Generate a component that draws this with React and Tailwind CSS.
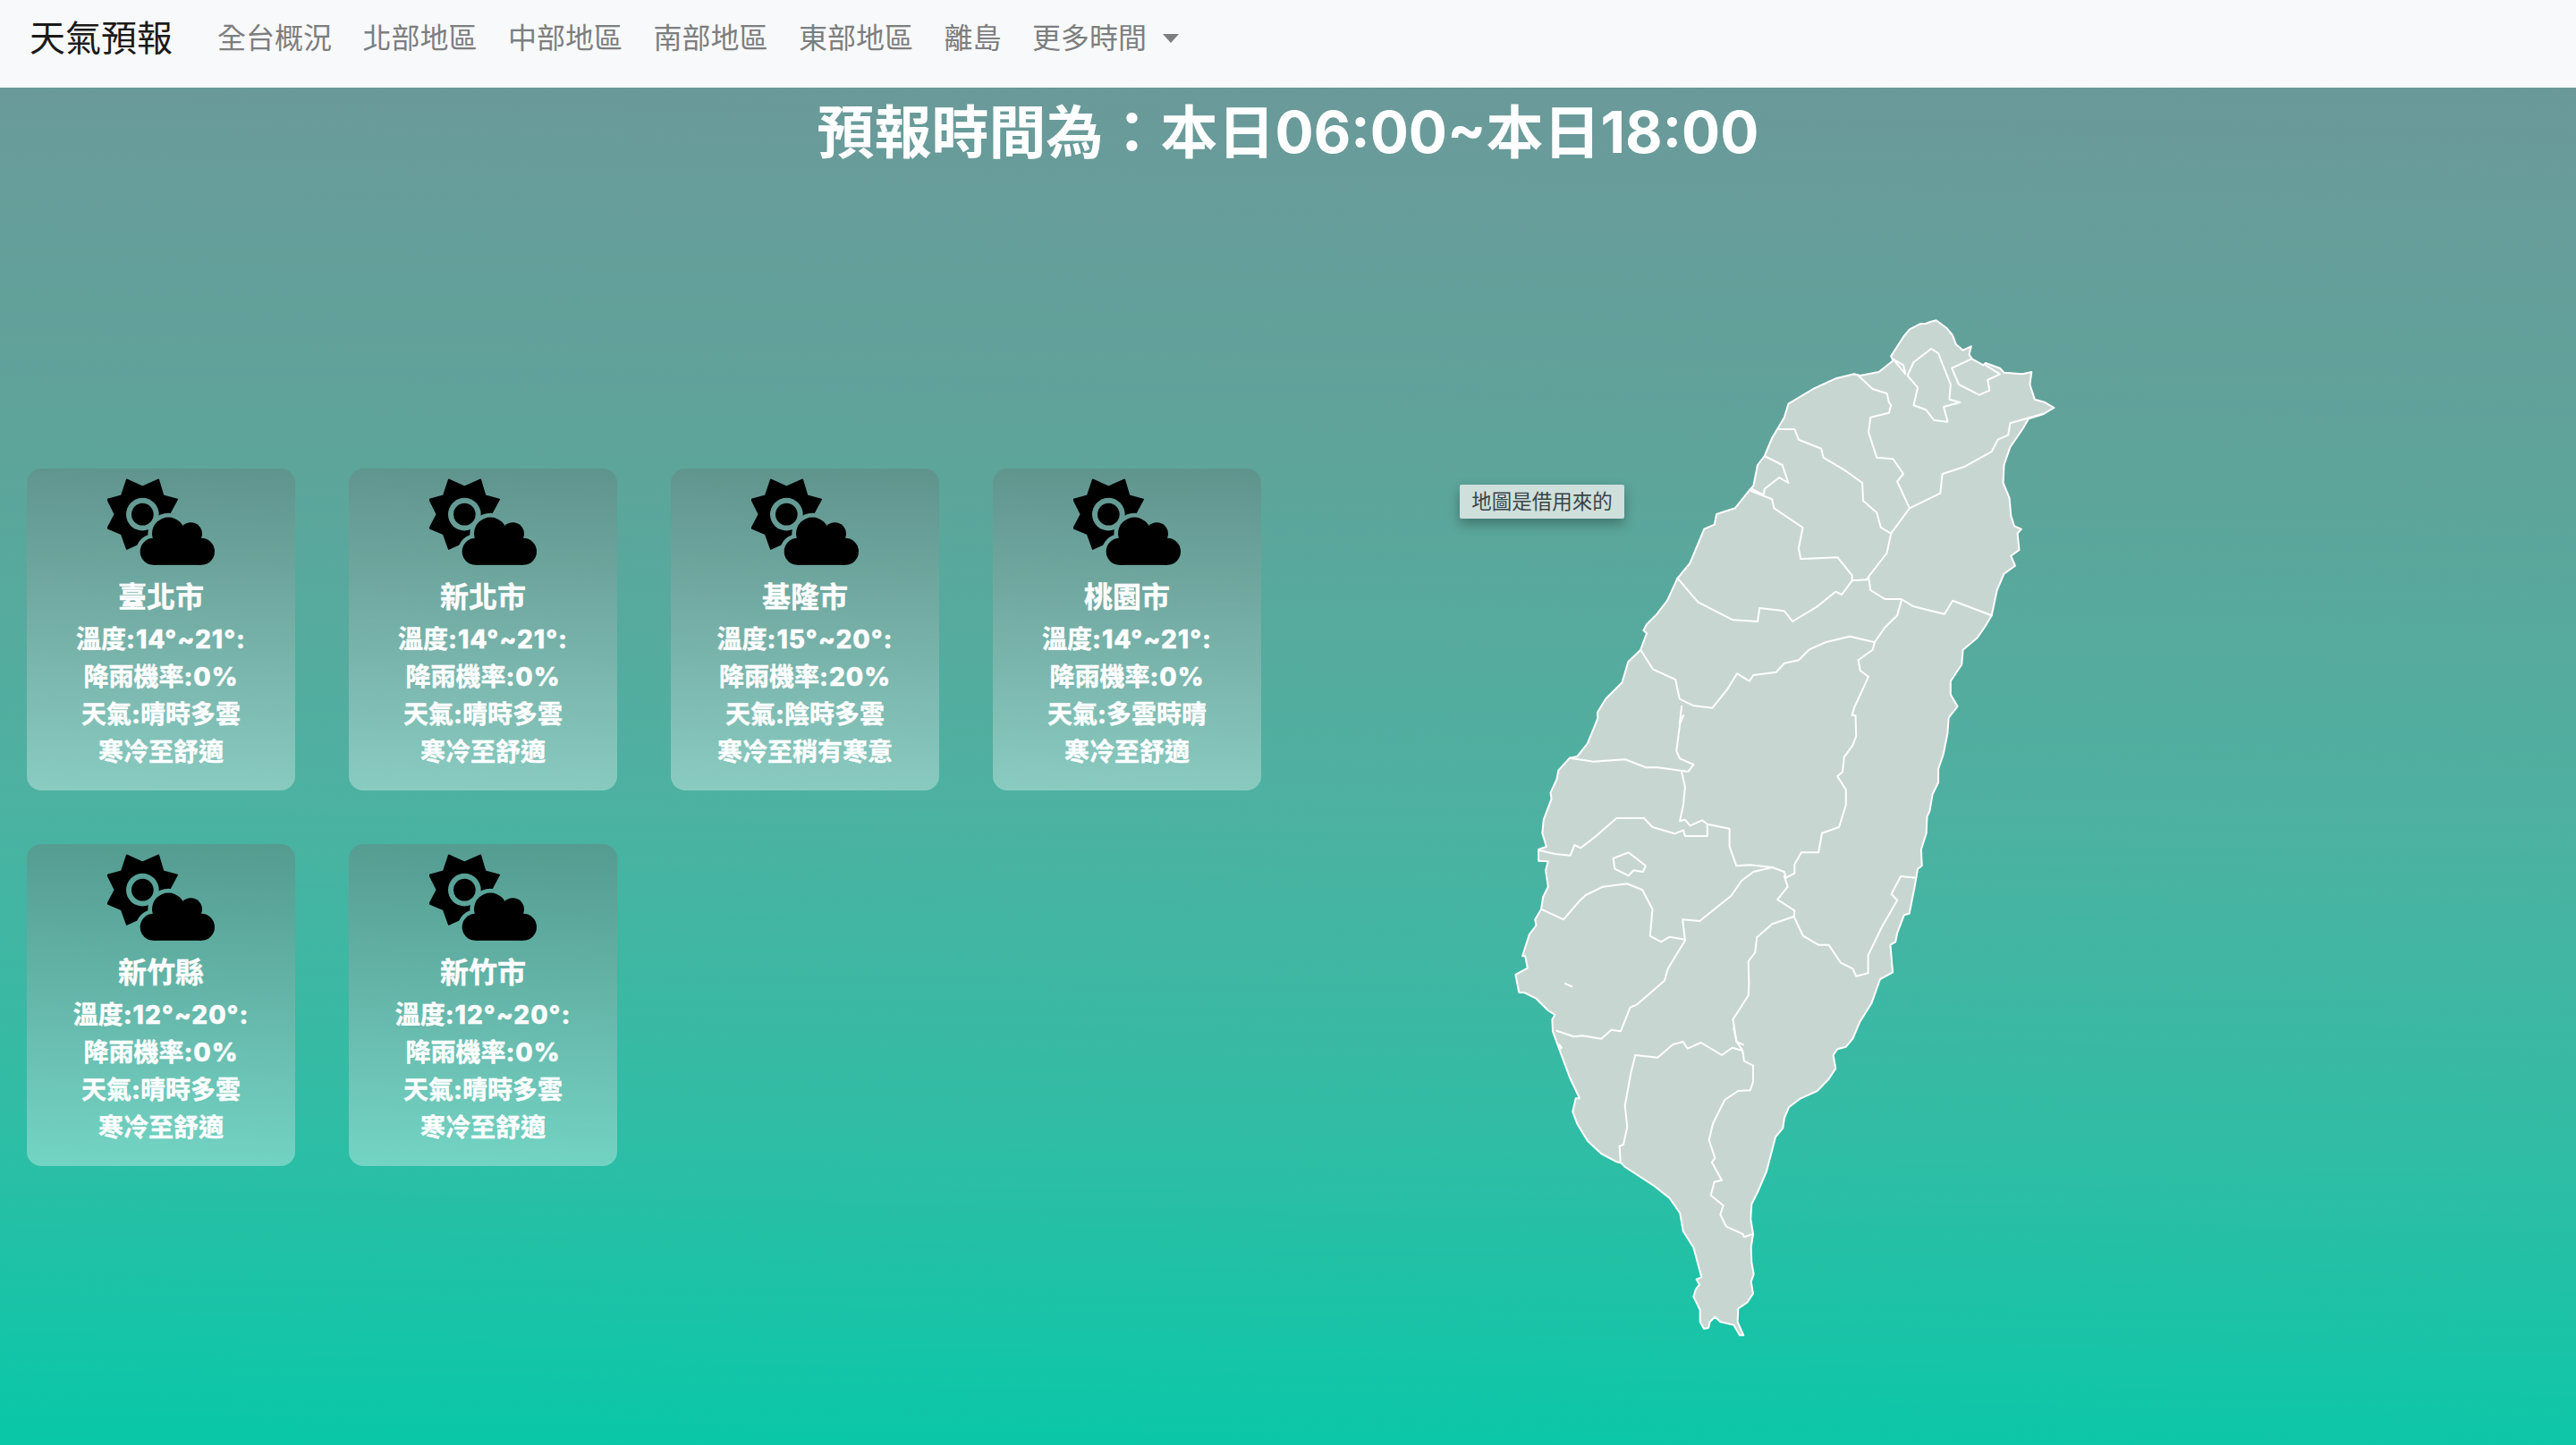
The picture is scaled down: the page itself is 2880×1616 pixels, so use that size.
import React from "react";

const z3 = (p) => p.map(([x, y]) => [1600 + x / 2.178, 330 + y / 3]);
const z4 = (p) => p.map(([x, y]) => [1660 + x / 2.613, 800 + y / 3]);
const z5 = (p) => p.map(([x, y]) => [1660 + x / 3, 1150 + y / 3]);
const d = (p, close) =>
  "M" + p.map(([x, y]) => `${(x - 1680).toFixed(1)} ${(y - 340).toFixed(1)}`).join("L") + (close ? "Z" : "");

const outline = [
  ...z3([[1165,115],[1190,97],[1205,95],[1215,90],[1230,85],[1255,110],[1270,135],[1278,165],[1295,185],[1315,172],[1310,200],[1318,215],[1345,235],[1350,228],[1385,245],[1395,260],[1440,265],[1462,258],[1458,300],[1470,350],[1495,360],[1517,378],[1490,400],[1455,415],[1440,450],[1410,510],[1395,570],[1393,630],[1408,680],[1412,740],[1420,775],[1437,785],[1428,800],[1432,855],[1412,875],[1422,908],[1395,935],[1378,990],[1365,1075],[1350,1110],[1330,1150],[1295,1190],[1292,1240],[1265,1295],[1265,1340],[1282,1380],[1262,1415]]),
  ...z4([[1355,10],[1352,60],[1340,130],[1325,180],[1325,225],[1308,265],[1300,320],[1292,340],[1290,395],[1275,450],[1277,505],[1265,515],[1255,580],[1240,665],[1225,670],[1205,730],[1200,760],[1185,770],[1190,840],[1192,862],[1155,885],[1130,965],[1095,1030],[1075,1085],[1055,1112],[1030,1120],[1018,1140],[1025,1185],[1005,1220]]),
  ...z5([[1115,210],[1060,235],[1020,265],[1005,300],[1000,335],[975,365],[945,480],[915,550],[895,590],[892,640],[900,690],[893,735],[895,785],[902,825],[893,850],[900,890],[880,920],[850,940],[848,985],[868,1030],[855,1030],[835,995],[790,985],[772,968],[755,985],[750,1005],[735,1008],[722,985],[722,945],[700,900],[708,875],[720,860],[710,842],[727,835],[700,735],[665,680],[655,620],[620,570],[570,530],[470,465],[458,452],[442,448],[390,420],[345,378],[310,320],[295,280],[305,235],[318,235],[285,165],[250,70],[228,10]]),
  ...z4([[197,1020],[205,1005],[185,990],[150,950],[115,930],[100,930],[90,870],[125,848],[118,808],[110,808],[130,735],[150,705],[147,685],[165,650],[170,610],[185,575],[178,520],[185,490],[157,488],[157,450],[180,440],[168,395],[172,350],[195,280],[192,260],[210,215],[215,185],[248,143],[270,138],[300,95],[330,10]]),
  ...z3([[405,1400],[425,1355],[465,1300],[480,1230],[510,1190],[525,1135],[517,1125],[525,1105],[550,1070],[575,1025],[600,950],[630,900],[665,785],[690,770],[695,735],[740,715],[775,655],[785,640],[795,570],[812,540],[830,480],[860,410],[870,365],[930,315],[985,280],[1030,265],[1045,270],[1090,258],[1125,220],[1120,205],[1150,140]]),
];

const lines = [
  z3([[1040,270],[1075,315],[1110,330],[1115,360],[1120,370],[1115,395],[1070,410],[1065,460],[1085,545],[1125,550],[1150,600],[1135,625],[1165,715]]),
  z3([[1218,180],[1175,225],[1160,270],[1185,310],[1175,370],[1205,385],[1225,420],[1258,425],[1248,375],[1288,360],[1262,350],[1265,300],[1235,195],[1218,180]]),
  z3([[1315,215],[1268,245],[1285,300],[1335,335],[1360,320],[1355,285],[1385,265],[1350,235]]),
  z3([[1125,215],[1155,265],[1150,235],[1125,215]]),
  z3([[845,450],[885,450],[895,485],[950,515],[955,545],[1010,590],[1050,630],[1052,690],[1085,730],[1095,780],[1120,800]]),
  z3([[812,540],[855,570],[870,630],[848,612],[812,650],[810,670],[780,650]]),
  z3([[775,655],[830,685],[835,715],[905,780],[895,850],[900,885],[990,880],[1025,940],[1025,958]]),
  z3([[600,950],[650,1030],[735,1090],[795,1095],[800,1050],[860,1060],[880,1095],[940,1045],[985,995],[1000,1005],[1025,958],[1060,955]]),
  z3([[1165,715],[1240,665],[1245,600],[1300,575],[1365,525],[1380,485],[1405,470],[1410,430],[1490,398]]),
  z3([[1165,715],[1120,800],[1110,865],[1065,945],[1060,955]]),
  z3([[1065,945],[1070,990],[1105,1020],[1145,1020],[1175,1045],[1250,1070],[1270,1025],[1365,1075]]),
  [...z3([[1145,1025],[1135,1075],[1105,1115],[1080,1165],[1075,1190],[1040,1225],[1045,1260],[1065,1280],[1030,1385],[1025,1410]]), ...z4([[1083,0],[1085,70],[1075,100],[1050,140],[1045,190],[1030,205],[1055,250],[1055,300],[1035,375],[985,395],[975,460],[925,460],[905,500],[905,530],[880,545]])],
  z3([[510,1190],[540,1255],[595,1290],[605,1355],[640,1378],[685,1385],[720,1325],[745,1270],[775,1295],[785,1275],[840,1265],[860,1235],[895,1225],[920,1190],[960,1165],[1020,1145],[1080,1165]]),
  [...z3([[610,1380],[605,1440]]), ...z4([[580,0],[570,30],[560,120],[570,145],[610,165],[595,188]])],
  z4([[248,143],[315,155],[410,148],[470,175],[505,175],[590,188]]),
  z4([[575,190],[585,240],[580,300],[570,355],[585,350],[600,370],[635,352],[650,365],[715,380],[715,440],[735,505],[775,502],[840,510],[875,525],[880,545]]),
  z4([[157,452],[205,465],[250,470],[262,435],[280,445],[325,405],[385,345],[465,345],[490,375],[555,397],[580,385],[585,405],[650,405],[650,365]]),
  z4([[375,480],[420,460],[470,505],[462,525],[435,520],[420,538],[380,515],[375,480]]),
  z4([[165,650],[230,685],[275,625],[295,603],[345,575],[415,565],[460,585],[490,650],[483,740],[515,760],[540,743],[585,752]]),
  z4([[585,755],[578,685],[628,690],[720,605],[750,555],[785,525],[840,510]]),
  z4([[585,755],[535,850],[525,890],[445,970],[425,980],[397,1060],[370,1055],[340,1085],[285,1075],[260,1078],[210,1058]]),
  z4([[875,540],[885,575],[855,618],[905,655],[903,675],[840,700],[795,745],[790,795],[770,825],[772,900],[770,940],[725,1020],[735,1095],[755,1105]]),
  z4([[903,675],[930,740],[975,770],[1005,770],[1040,830],[1075,850],[1085,875],[1120,865],[1120,805],[1160,710],[1175,680],[1205,620],[1188,600],[1215,540],[1260,545]]),
  z4([[235,900],[255,910]]),
  z5([[505,90],[580,98],[630,55],[665,45],[680,68],[725,48],[795,90],[830,65],[865,75],[870,110],[900,125],[900,180],[890,208],[850,210],[805,240],[765,320],[752,375],[772,435],[762,450],[795,510],[770,515],[758,560],[800,595],[790,625],[810,665],[865,690],[870,700],[900,690]]),
  z5([[505,90],[490,150],[470,260],[478,330],[465,390],[452,395],[455,450]]),
  z5([[835,0],[845,45],[865,75]]),
  z5([[250,55],[258,65],[250,70],[250,55]]),
];

function TaiwanMap() {
  return (
    <svg width="640" height="1170" viewBox="0 0 640 1170" className="block">
      <path d={d(outline, true)} fill="#c8d6d1" stroke="#ffffff" strokeWidth="2" strokeLinejoin="round" />
      {lines.map((l, i) => (
        <path key={i} d={d(l)} fill="none" stroke="#ffffff" strokeWidth="2" strokeLinejoin="round" strokeLinecap="round" />
      ))}
    </svg>
  );
}

function WeatherIcon({ id }) {
  const cloud = (
    <>
      <circle cx="265" cy="230" r="55" />
      <circle cx="340" cy="230" r="38" />
      <circle cx="375" cy="290" r="45" />
      <circle cx="215" cy="290" r="45" />
      <rect x="215" y="245" width="160" height="90" />
    </>
  );
  return (
    <svg width="120" height="97" viewBox="60 45 360 290" className="block">
      <defs>
        <mask id={id} maskUnits="userSpaceOnUse" x="0" y="0" width="480" height="360">
          <rect x="0" y="0" width="480" height="360" fill="#fff" />
          <circle cx="178" cy="165" r="55" fill="#000" />
          <g fill="#000" stroke="#000" strokeWidth="28">{cloud}</g>
        </mask>
      </defs>
      <path
        mask={`url(#${id})`}
        d="M125 48L178 72L232 48L248 102L295 115L268 165L295 212L248 230L232 282L178 258L125 282L107 232L60 212L85 165L60 115L107 102Z"
        fill="#000"
        stroke="#000"
        strokeWidth="4"
        strokeLinejoin="round"
      />
      <circle cx="178" cy="165" r="37" fill="#000" />
      <g fill="#000">{cloud}</g>
    </svg>
  );
}

const cards = [
  ["臺北市", "14°~21°:", "0%", "晴時多雲", "寒冷至舒適"],
  ["新北市", "14°~21°:", "0%", "晴時多雲", "寒冷至舒適"],
  ["基隆市", "15°~20°:", "20%", "陰時多雲", "寒冷至稍有寒意"],
  ["桃園市", "14°~21°:", "0%", "多雲時晴", "寒冷至舒適"],
  ["新竹縣", "12°~20°:", "0%", "晴時多雲", "寒冷至舒適"],
  ["新竹市", "12°~20°:", "0%", "晴時多雲", "寒冷至舒適"],
];

const navLinks = ["全台概況", "北部地區", "中部地區", "南部地區", "東部地區", "離島"];

export default function App() {
  return (
    <div className="flex h-[1616px] w-full flex-col overflow-hidden font-['Inter','Noto_Sans_CJK_TC',sans-serif]">
      <nav className="flex h-[98px] shrink-0 items-center bg-[#f8f9fa] pb-[13px] pl-[33px]">
        <span className="text-[40px] leading-[60px] text-[#1a1a1a]">天氣預報</span>
        <div className="ml-[50px] flex items-center gap-[34.5px] text-[32px] leading-[48px] text-[#7d7e7f]">
          {navLinks.map((n) => (
            <span key={n}>{n}</span>
          ))}
          <span className="flex items-center">
            更多時間
            <span className="ml-[18px] h-0 w-0 border-x-[9px] border-t-[10px] border-x-transparent border-t-[#7d7e7f]" />
          </span>
        </div>
      </nav>
      <main className="flex flex-1 flex-col bg-[linear-gradient(181deg,#6b9999_0%,#5da59b_30%,#4db1a1_53%,#32bca5_75%,#08c8a8_100%)]">
        <h1 className="mt-[11px] text-center text-[64px] leading-[77px] font-bold text-white">
          預報時間為：本日06:00~本日18:00
        </h1>
        <div className="flex flex-1">
          <div className="mt-[338px] ml-[30px] grid h-fit w-[1380px] shrink-0 grid-cols-[repeat(4,300px)] gap-[60px]">
            {cards.map((c, i) => (
              <div
                key={i}
                className="flex h-[360px] flex-col items-center rounded-[16px] bg-[linear-gradient(182deg,rgba(96,131,127,0.5)_0%,rgba(255,255,255,0.34)_100%)] pt-[11px] text-center font-bold text-white [-webkit-text-stroke:0.4px_white]"
              >
                <WeatherIcon id={`sun-mask-${i}`} />
                <div className="mt-[12px] text-[32px] leading-[48px]">{c[0]}</div>
                <div className="mt-[2px] text-[28px] leading-[42px]">
                  <div>
                    溫度<span className="font-extrabold tracking-[1px]">:{c[1]}</span>
                  </div>
                  <div>
                    降雨機率<span className="font-extrabold tracking-[1px]">:{c[2]}</span>
                  </div>
                  <div>
                    天氣<span className="font-extrabold">:</span>{c[3]}
                  </div>
                  <div>{c[4]}</div>
                </div>
              </div>
            ))}
          </div>
          <div className="relative flex-1 pt-[154px] pl-[270px]">
            <TaiwanMap />
            <div className="absolute top-[356px] left-[222px] flex h-[38px] w-[184px] items-center justify-center rounded-[2px] bg-[#cfdfdc] text-[22.5px] text-[#3a4446] shadow-[0_6px_14px_rgba(0,0,0,0.3)]">
              地圖是借用來的
            </div>
          </div>
        </div>
      </main>
    </div>
  );
}
